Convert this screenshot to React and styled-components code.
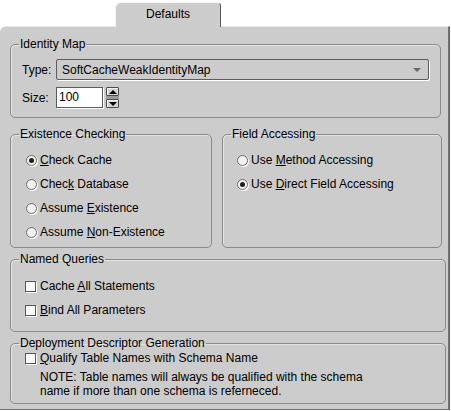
import React from 'react'
import styled, { createGlobalStyle } from 'styled-components';

const GlobalStyle = createGlobalStyle`
    body {
        margin:0;
        background:#ffffff;
        font-family:"Liberation Sans", Arial, sans-serif;
        font-size:12px;
        color:#000000;
    }
`

const Page = styled.div`
    width:451px;
    height:411px;
    padding-top:2px;
    box-sizing:border-box;
    background:#ffffff;
`

const TabRow = styled.div`
    display:flex;
    padding-left:115px;
    height:24px;
`

const Tab = styled.div`
    width:106px;
    height:25px;
    box-sizing:border-box;
    background:#cccccc;
    border-radius:6px 4px 0 0;
    border-left:1px solid #f4f4f4;
    border-top:1px solid #f4f4f4;
    border-right:1px solid #5a5a5a;
    display:flex;
    justify-content:center;
    padding-top:4px;
    position:relative;
    z-index:1;
`

const Panel = styled.div`
    width:450px;
    height:384px;
    box-sizing:border-box;
    background:#cccccc;
    border-radius:6px 0 0 0;
    border-top:1px solid #e6e6e6;
    border-right:2px solid #6e6e6e;
    border-bottom:1px solid #6e6e6e;
    padding:10px 0 0 10px;
    display:flex;
    flex-direction:column;
`

const Group = styled.fieldset`
    margin:${({mt}) => mt || 0}px 0 0 0;
    width:${({w}) => w}px;
    box-sizing:border-box;
    border:1px solid #8a8a8a;
    border-radius:5px;
    box-shadow:inset 1px 1px 0 #e2e2e2;
    padding:0;
    min-width:0;
`

const Legend = styled.legend`
    padding:0 1px;
    margin-left:8px;
    line-height:14px;
`

const Content = styled.div`
    padding:${({pad}) => pad};
`

const Row = styled.div`
    display:flex;
    align-items:center;
    height:${({h}) => h || 24}px;
    margin-top:${({mt}) => mt || 0}px;
`

const FieldLabel = styled.span`
    width:34px;
`

const Combo = styled.div`
    flex:1;
    height:21px;
    box-sizing:border-box;
    border:1px solid #5c5c5c;
    box-shadow:1px 1px 0 #ffffff;
    border-radius:2px;
    display:flex;
    align-items:center;
    justify-content:space-between;
    padding:0 7px 0 5px;
    margin-right:11px;
`

const Arrow = styled.span`
    width:0;
    height:0;
    border-left:4px solid transparent;
    border-right:4px solid transparent;
    border-top:4px solid #6a6a6a;
`

const SizeInput = styled.div`
    width:47px;
    height:21px;
    box-sizing:border-box;
    background:#ffffff;
    border:1px solid #5c5c5c;
    box-shadow:1px 1px 0 #ffffff;
    padding:2px 0 0 2px;
`

const Spinner = styled.div`
    margin-left:3px;
    display:flex;
    flex-direction:column;
    justify-content:space-between;
    height:21px;
    width:13px;
    background:linear-gradient(#cccccc 0 9px, #9a9a9a 9px 12px, #cccccc 12px);
`

const SpinButton = styled.div`
    height:9px;
    box-sizing:border-box;
    border:1px solid #4a4a4a;
    border-radius:1px;
    background:#d4d4d4;
    box-shadow:inset 1px 1px 0 #f4f4f4;
    display:flex;
    align-items:center;
    justify-content:center;
`

const SpinArrow = styled.span`
    width:0;
    height:0;
    border-left:4px solid transparent;
    border-right:4px solid transparent;
    ${({up}) => up ? 'border-bottom:4px solid #000;' : 'border-top:4px solid #000;'}
`

const Columns = styled.div`
    display:flex;
    gap:10px;
`

const Radio = styled.span`
    width:11px;
    height:11px;
    box-sizing:border-box;
    border-radius:50%;
    border:1px solid #6a6a6a;
    background:#f2f2f2;
    box-shadow:1px 1px 0 #ffffff;
    display:flex;
    align-items:center;
    justify-content:center;
    margin-right:3px;
    &::after{
        content:'';
        width:5px;
        height:5px;
        border-radius:50%;
        background:${({checked}) => checked ? '#1e1e1e' : 'transparent'};
    }
`

const Check = styled.span`
    width:11px;
    height:11px;
    box-sizing:border-box;
    border:1px solid #555555;
    background:#ffffff;
    box-shadow:1px 1px 0 #ffffff;
    margin:0 4px 0 0;
`

const Note = styled.div`
    margin-top:4px;
    padding-left:15px;
    line-height:14px;
`

const U = styled.span`
    text-decoration:underline;
`

const Option = ({checked, children}) => (
    <Row>
        <Radio checked={checked} />
        <span>{children}</span>
    </Row>
)

const Box = ({children, h}) => (
    <Row h={h}>
        <Check />
        <span>{children}</span>
    </Row>
)

const App = () => {
    return (
        <Page>
            <GlobalStyle />
            <TabRow>
                <Tab>Defaults</Tab>
            </TabRow>
            <Panel>
                <Group w={431}>
                    <Legend>Identity Map</Legend>
                    <Content pad="8px 0 9px 11px">
                        <Row h={21}>
                            <FieldLabel>Type:</FieldLabel>
                            <Combo>
                                <span>SoftCacheWeakIdentityMap</span>
                                <Arrow />
                            </Combo>
                        </Row>
                        <Row h={21} mt={7}>
                            <FieldLabel>Size:</FieldLabel>
                            <SizeInput>100</SizeInput>
                            <Spinner>
                                <SpinButton><SpinArrow up /></SpinButton>
                                <SpinButton><SpinArrow /></SpinButton>
                            </Spinner>
                        </Row>
                    </Content>
                </Group>
                <Columns>
                    <Group w={202} mt={9}>
                        <Legend>Existence Checking</Legend>
                        <Content pad="7px 0 3px 15px">
                            <Option checked><U>C</U>heck Cache</Option>
                            <Option>Chec<U>k</U> Database</Option>
                            <Option>Assume <U>E</U>xistence</Option>
                            <Option>Assume <U>N</U>on-Existence</Option>
                        </Content>
                    </Group>
                    <Group w={220} mt={9}>
                        <Legend>Field Accessing</Legend>
                        <Content pad="7px 0 3px 14px">
                            <Option>Use <U>M</U>ethod Accessing</Option>
                            <Option checked>Use <U>D</U>irect Field Accessing</Option>
                        </Content>
                    </Group>
                </Columns>
                <Group w={436} mt={4}>
                    <Legend>Named Queries</Legend>
                    <Content pad="8px 0 9px 14px">
                        <Box>Cache <U>A</U>ll Statements</Box>
                        <Box><U>B</U>ind All Parameters</Box>
                    </Content>
                </Group>
                <Group w={436} mt={4}>
                    <Legend>Deployment Descriptor Generation</Legend>
                    <Content pad="0 0 5px 14px">
                        <Box h={16}><U>Q</U>ualify Table Names with Schema Name</Box>
                        <Note>
                            NOTE: Table names will always be qualified with the schema<br />
                            name if more than one schema is referneced.
                        </Note>
                    </Content>
                </Group>
            </Panel>
        </Page>
    )
}

export default App
